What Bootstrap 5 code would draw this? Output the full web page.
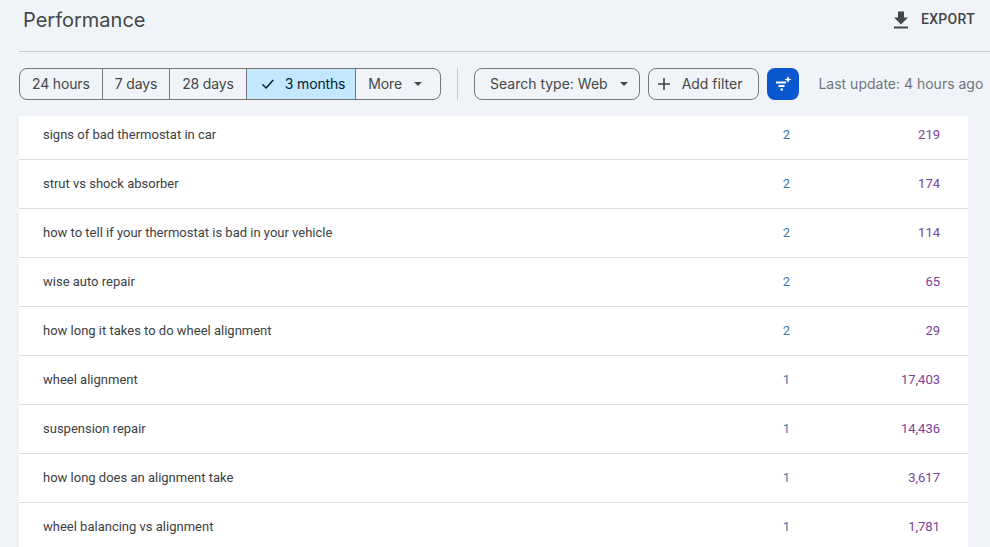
<!DOCTYPE html>
<html lang="en">
<head>
    <meta charset="UTF-8">
    <meta name="viewport" content="width=device-width, initial-scale=1.0">
    <title>Performance</title>
    <link href="https://cdn.jsdelivr.net/npm/bootstrap@5.3.3/dist/css/bootstrap.min.css" rel="stylesheet">
    <style>
        html, body {
            height: 547px;
            overflow: hidden;
        }
        body {
            background: #f0f4f9;
            font-family: Inter, Roboto, sans-serif;
            color: #444746;
        }
        .page-head {
            height: 52px;
            margin-left: 19px;
            padding: 0 15px 12px 4px;
            border-bottom: 1px solid #c7c9cc;
        }
        .page-title {
            font-size: 20px;
            font-weight: 400;
            margin: 0;
            color: #444746;
        }
        .export-link {
            font-family: Roboto, sans-serif;
            font-size: 14px;
            font-weight: 500;
            letter-spacing: .3px;
            color: #444746;
            gap: 11px;
        }
        .filter-bar {
            height: 64px;
            padding-left: 19px;
            white-space: nowrap;
        }
        .range-group {
            display: flex;
            height: 32px;
            border: 1px solid #747775;
            border-radius: 8px;
            overflow: hidden;
        }
        .range-item {
            display: flex;
            align-items: center;
            padding: 0 12px 1px;
            font-size: 14px;
            letter-spacing: -.15px;
            color: #444746;
            border-right: 1px solid #747775;
        }
        .range-item:last-child {
            border-right: 0;
            padding-right: 18px;
        }
        .range-item.picked {
            background: #c2e7ff;
            color: #001d35;
            padding: 0 10px 1px 14px;
            gap: 10px;
        }
        .caret-down {
            width: 0;
            height: 0;
            margin-left: 12px;
            border-left: 4px solid transparent;
            border-right: 4px solid transparent;
            border-top: 4px solid #444746;
        }
        .bar-sep {
            width: 1px;
            height: 32px;
            margin: 0 16px;
            background: #c7c9cc;
        }
        .chip-btn {
            display: flex;
            align-items: center;
            height: 32px;
            border: 1px solid #747775;
            border-radius: 8px;
            font-size: 14px;
            color: #444746;
            padding: 0 11px 1px 15px;
        }
        .chip-add {
            margin-left: 8px;
            padding: 0 16px 1px 9px;
            gap: 11px;
        }
        .chip-add svg { margin-left: -1px; }
        .sparkle-btn {
            display: flex;
            align-items: center;
            justify-content: center;
            width: 32px;
            height: 32px;
            margin-left: 8px;
            border-radius: 8px;
            background: #0b57d0;
        }
        .last-update {
            margin-left: 19px;
            padding-bottom: 1px;
            font-size: 14px;
            color: #70757a;
        }
        .query-wrap {
            width: 949px;
            margin-left: 19px;
            background: #fff;
        }
        .query-table {
            margin: 0;
            table-layout: fixed;
            font-family: Roboto, sans-serif;
            font-size: 13px;
        }
        .query-table td {
            height: 49px;
            padding: 0;
            vertical-align: middle;
            border-width: 0 0 1px;
            border-color: #e0e0e0;
            color: #3c4043;
        }
        .query-table tr:first-child td {
            height: 43px;
            padding-bottom: 6px;
        }
        .query-table td.q-name { padding-left: 24px; }
        .query-table td.q-clicks,
        .query-table td.q-impr {
            width: 150px;
            padding-right: 28px;
            text-align: right;
        }
        .query-table td.q-clicks { color: #3b78ab; }
        .query-table td.q-impr { color: #7b3f98; }
    </style>
</head>
<body>
    <div class="page-head d-flex justify-content-between align-items-center">
        <h1 class="page-title">Performance</h1>
        <div class="export-link d-flex align-items-center">
            <svg width="18" height="18" viewBox="0 0 18 18" fill="#444746"><path d="M6 1h6v6h4l-7 7-7-7h4z" transform="translate(0 -.5)"/><rect x="2" y="15.5" width="14" height="2"/></svg>
            <span>EXPORT</span>
        </div>
    </div>

    <div class="filter-bar d-flex align-items-center">
        <div class="range-group">
            <div class="range-item">24 hours</div>
            <div class="range-item">7 days</div>
            <div class="range-item">28 days</div>
            <div class="range-item picked">
                <svg width="14" height="14" viewBox="0 0 14 14" fill="none" stroke="#001d35" stroke-width="1.5"><path d="M1.5 7.5 5.2 11l7-8"/></svg>
                3 months
            </div>
            <div class="range-item">More<span class="caret-down"></span></div>
        </div>
        <div class="bar-sep"></div>
        <div class="chip-btn">Search type: Web<span class="caret-down"></span></div>
        <div class="chip-btn chip-add">
            <svg width="14" height="14" viewBox="0 0 14 14" fill="none" stroke="#444746" stroke-width="1.6"><path d="M7 1v12M1 7h12"/></svg>
            Add filter
        </div>
        <div class="sparkle-btn">
            <svg width="20" height="20" viewBox="0 0 20 20" fill="none" stroke="#fff" stroke-width="1.8"><path d="M3 8.5h10M5.500 12h6M7.500 15.500h2.500"/><path d="M15 2l1 2.500 2.500 1-2.500 1-1 2.500-1-2.500-2.500-1 2.500-1z" fill="#fff" stroke="none"/></svg>
        </div>
        <div class="last-update">Last update: 4 hours ago</div>
    </div>

    <div class="query-wrap">
        <table class="table query-table">
            <tbody id="rows"></tbody>
        </table>
    </div>

    <script>
        const rows = [
            ["signs of bad thermostat in car", "2", "219"],
            ["strut vs shock absorber", "2", "174"],
            ["how to tell if your thermostat is bad in your vehicle", "2", "114"],
            ["wise auto repair", "2", "65"],
            ["how long it takes to do wheel alignment", "2", "29"],
            ["wheel alignment", "1", "17,403"],
            ["suspension repair", "1", "14,436"],
            ["how long does an alignment take", "1", "3,617"],
            ["wheel balancing vs alignment", "1", "1,781"]
        ];
        document.getElementById("rows").innerHTML = rows.map(r =>
            `<tr><td class="q-name">${r[0]}</td><td class="q-clicks">${r[1]}</td><td class="q-impr">${r[2]}</td></tr>`
        ).join("");
    </script>
    <script src="https://cdn.jsdelivr.net/npm/bootstrap@5.3.3/dist/js/bootstrap.bundle.min.js"></script>
</body>
</html>
